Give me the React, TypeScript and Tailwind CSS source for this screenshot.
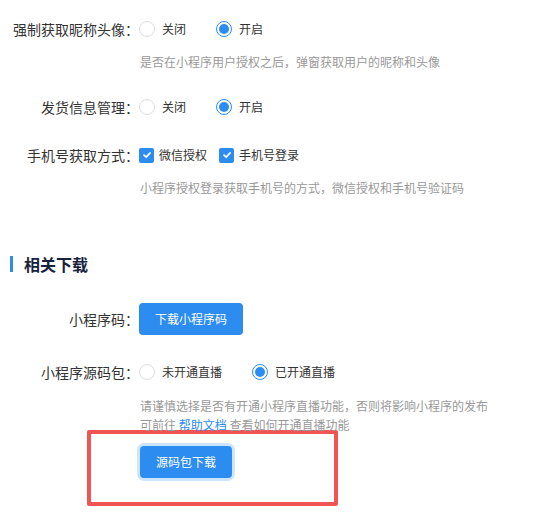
import React from "react";

function Radio({ checked, label }: { checked?: boolean; label: string }) {
  return (
    <label className="flex items-center gap-[7px] mr-[30px] cursor-pointer">
      <span
        className={
          checked
            ? "w-4 h-4 rounded-full border border-[#2d8cf0] flex items-center justify-center bg-white"
            : "w-4 h-4 rounded-full border border-[#dcdee2] bg-white"
        }
      >
        {checked && <span className="w-[10px] h-[10px] rounded-full bg-[#2d8cf0]" />}
      </span>
      <span className="text-[12px] text-[#333]">{label}</span>
    </label>
  );
}

function Check({ label }: { label: string }) {
  return (
    <label className="flex items-center gap-[5px] mr-[12px] cursor-pointer">
      <span className="w-[15px] h-[15px] rounded-[2px] bg-[#2d8cf0] flex items-center justify-center">
        <svg width="10" height="10" viewBox="0 0 10 10" fill="none">
          <path d="M2 5.2 L4.2 7.2 L8 3" stroke="white" strokeWidth="1.8" strokeLinecap="round" strokeLinejoin="round" />
        </svg>
      </span>
      <span className="text-[12px] text-[#333]">{label}</span>
    </label>
  );
}

function Row({ label, children }: { label: string; children: React.ReactNode }) {
  return (
    <div className="flex items-center h-8">
      <div className="w-[139px] shrink-0 text-right text-[14px] text-[#333] whitespace-nowrap">{label}</div>
      <div className="flex items-center">{children}</div>
    </div>
  );
}

function Desc({ children }: { children: React.ReactNode }) {
  return <div className="pl-[140px] text-[12px] leading-[19px] text-[#999]">{children}</div>;
}

export default function App() {
  return (
    <div className="w-[548px] h-[522px] bg-white overflow-hidden pt-[13px] font-['Noto_Sans_CJK_SC','Noto_Sans',sans-serif]">
      {/* 基本设置 */}
      <Row label="强制获取昵称头像：">
        <Radio label="关闭" />
        <Radio checked label="开启" />
      </Row>
      <div className="mt-[7px]">
        <Desc>是否在小程序用户授权之后，弹窗获取用户的昵称和头像</Desc>
      </div>

      <div className="mt-[20px]">
        <Row label="发货信息管理：">
          <Radio label="关闭" />
          <Radio checked label="开启" />
        </Row>
      </div>

      <div className="mt-[16px]">
        <Row label="手机号获取方式：">
          <Check label="微信授权" />
          <Check label="手机号登录" />
        </Row>
      </div>
      <div className="mt-[7px]">
        <Desc>小程序授权登录获取手机号的方式，微信授权和手机号验证码</Desc>
      </div>

      {/* 相关下载 */}
      <div className="mt-[55px] flex items-center h-6">
        <span className="w-[3px] h-4 bg-[#2d8cf0] ml-[10px]" />
        <span className="ml-[11px] text-[16px] font-bold text-[#17233d]">相关下载</span>
      </div>

      <div className="mt-[27px]">
        <Row label="小程序码：">
          <button className="h-8 w-[104px] rounded-[4px] bg-[#2d8cf0] text-white text-[12px]">下载小程序码</button>
        </Row>
      </div>

      <div className="mt-[21px]">
        <Row label="小程序源码包：">
          <Radio label="未开通直播" />
          <Radio checked label="已开通直播" />
        </Row>
      </div>
      <div className="mt-[8px]">
        <Desc>
          <div>请谨慎选择是否有开通小程序直播功能，否则将影响小程序的发布</div>
          <div>
            可前往 <a className="text-[#2d8cf0]">帮助文档</a> 查看如何开通直播功能
          </div>
        </Desc>
      </div>

      <div className="-mt-1 ml-[87px] w-[251px] h-[76px] border-4 border-[#f25454] rounded-[2px] pt-[12px] pl-[49px]">
        <button className="h-8 w-[92px] rounded-[4px] bg-[#2d8cf0] text-white text-[12px] ring-[3px] ring-[#cde5fd]">
          源码包下载
        </button>
      </div>
    </div>
  );
}
